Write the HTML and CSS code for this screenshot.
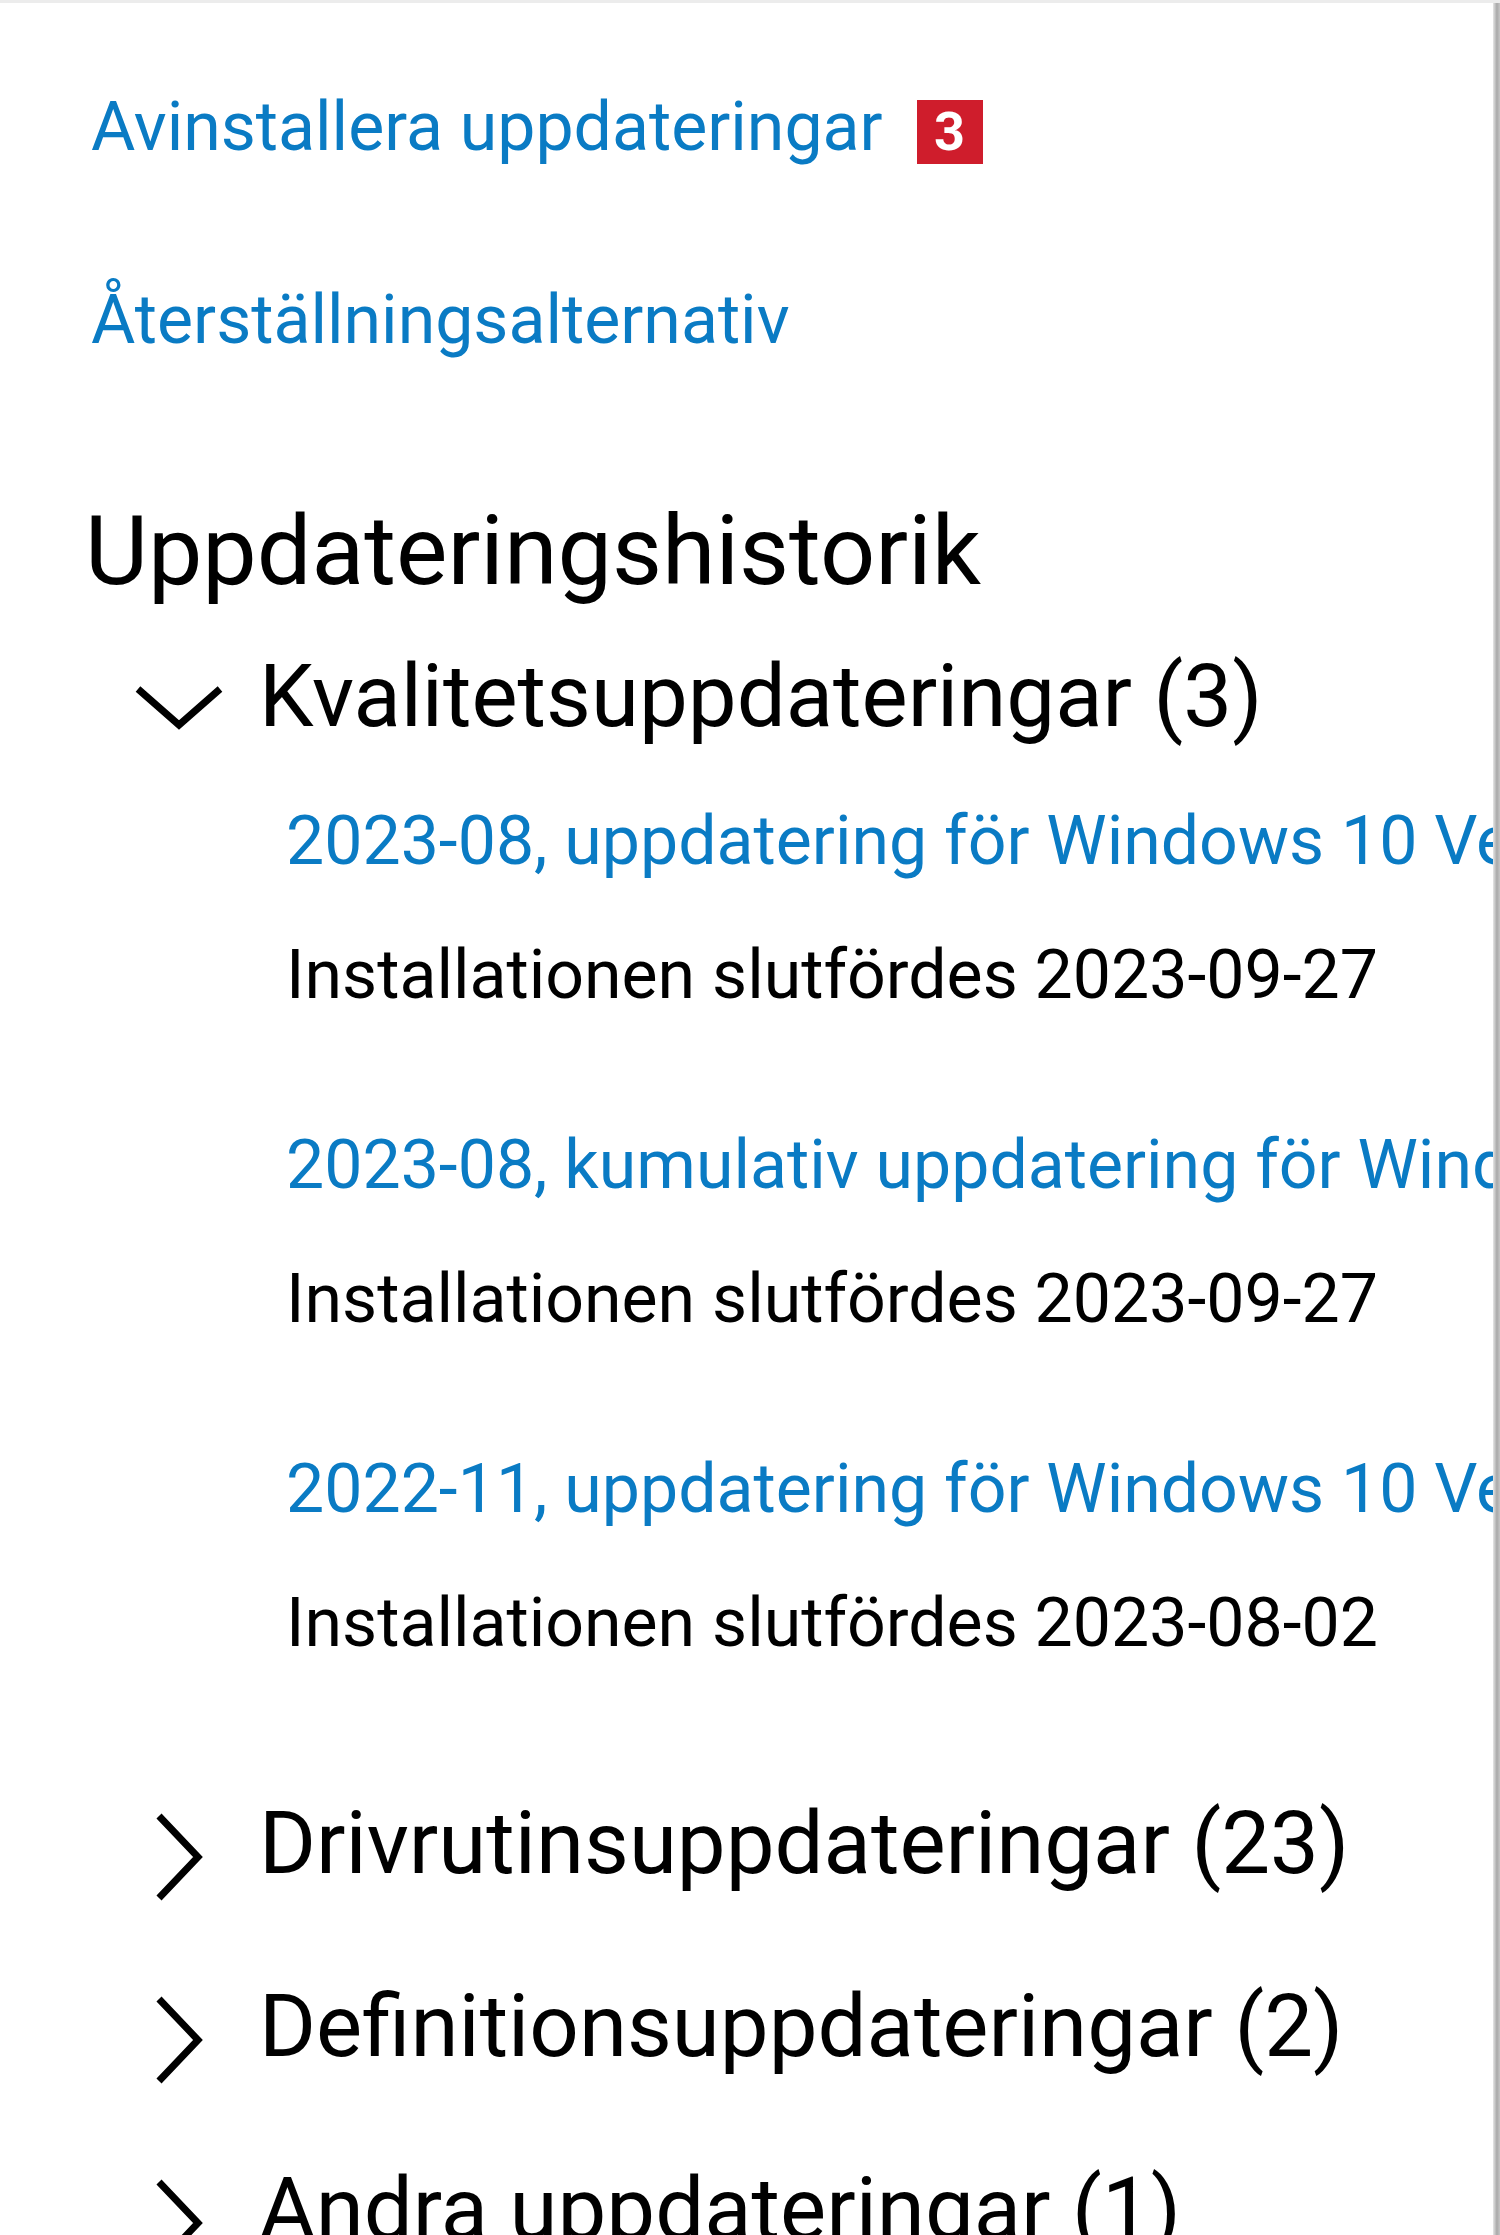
FILE: index.html
```html
<!DOCTYPE html>
<html lang="sv">
<head>
<meta charset="utf-8">
<title>Uppdateringshistorik</title>
<link rel="stylesheet" href="styles.css">
</head>
<body>
<div class="frame">
  <main class="panel">
    <div class="link-row">
      <a class="link" href="#">Avinstallera uppdateringar</a>
      <span class="badge">3</span>
    </div>
    <a class="link link-second" href="#">Återställningsalternativ</a>

    <h1 class="heading">Uppdateringshistorik</h1>

    <section class="group open">
      <div class="group-head">
        <span class="chev chev-down">
          <svg width="90" height="45" viewBox="0 0 90 45"><polyline points="4,4 45,40 86,4" fill="none" stroke="#000" stroke-width="7"/></svg>
        </span>
        <span class="group-title">Kvalitetsuppdateringar (3)</span>
      </div>
      <ul class="items">
        <li class="item">
          <a class="link" href="#">2023-08, uppdatering för Windows 10 Version 22H2 för x64-baserade system (KB5029709)</a>
          <p class="status">Installationen slutfördes 2023-09-27</p>
        </li>
        <li class="item">
          <a class="link" href="#">2023-08, kumulativ uppdatering för Windows 10 Version 22H2 för x64-baserade system (KB5029244)</a>
          <p class="status">Installationen slutfördes 2023-09-27</p>
        </li>
        <li class="item">
          <a class="link" href="#">2022-11, uppdatering för Windows 10 Version 22H2 för x64-baserade system (KB4023057)</a>
          <p class="status">Installationen slutfördes 2023-08-02</p>
        </li>
      </ul>
    </section>

    <section class="group closed">
      <div class="group-head">
        <span class="chev chev-right">
          <svg width="48" height="88" viewBox="0 0 48 88"><polyline points="4,3 43,44 4,85" fill="none" stroke="#000" stroke-width="7"/></svg>
        </span>
        <span class="group-title">Drivrutinsuppdateringar (23)</span>
      </div>
    </section>

    <section class="group closed">
      <div class="group-head">
        <span class="chev chev-right">
          <svg width="48" height="88" viewBox="0 0 48 88"><polyline points="4,3 43,44 4,85" fill="none" stroke="#000" stroke-width="7"/></svg>
        </span>
        <span class="group-title">Definitionsuppdateringar (2)</span>
      </div>
    </section>

    <section class="group closed">
      <div class="group-head">
        <span class="chev chev-right">
          <svg width="48" height="88" viewBox="0 0 48 88"><polyline points="4,3 43,44 4,85" fill="none" stroke="#000" stroke-width="7"/></svg>
        </span>
        <span class="group-title">Andra uppdateringar (1)</span>
      </div>
    </section>
  </main>
  <div class="edge"></div>
</div>
</body>
</html>
```

FILE: styles.css
```css
* {
  box-sizing: border-box;
}

html,
body {
  margin: 0;
  padding: 0;
  background: #ffffff;
}

body {
  font-family: Roboto, "Noto Sans", "Liberation Sans", sans-serif;
  color: #000000;
  height: 2235px;
  overflow: hidden;
}

.frame {
  display: flex;
  height: 2235px;
  border-top: 3px solid #ececec;
}

.panel {
  flex: 1;
  min-width: 0;
  overflow: hidden;
  padding: 84px 0 0 91px;
  white-space: nowrap;
}

.edge {
  width: 7px;
  flex: none;
  background: linear-gradient(to right, #e6e6e6, #a9a9a9 55%, #c6c6c6);
}

.link {
  display: block;
  font-size: 68px;
  line-height: 80px;
  color: #0a7bc4;
  text-decoration: none;
}

.link-row {
  display: flex;
  align-items: flex-start;
  gap: 34px;
}

.badge {
  margin-top: 13px;
  width: 66px;
  height: 64px;
  background: #cf1d2c;
  color: #ffffff;
  font-weight: 700;
  font-size: 54px;
  line-height: 64px;
  text-align: center;
}

.link-second {
  margin-top: 113px;
}

.heading {
  margin: 136px 0 0 -6px;
  font-size: 97px;
  line-height: 110px;
  font-weight: 400;
}

.group-head {
  display: flex;
  align-items: flex-start;
  margin-left: 42px;
}

.group.open .group-head {
  margin-top: 40px;
}

.group.closed {
  margin-top: 75px;
}

.group.open + .group.closed {
  margin-top: 130px;
}

.chev {
  width: 92px;
  flex: none;
  display: flex;
  justify-content: center;
  margin-right: 34px;
}

.chev-down svg {
  margin-top: 39px;
}

.chev-right svg {
  margin-top: 20px;
}

.group-title {
  font-size: 87px;
  line-height: 100px;
}

.items {
  list-style: none;
  margin: 55px 0 0;
  padding: 0 0 0 195px;
}

.item + .item {
  margin-top: 110px;
}

.status {
  margin: 54px 0 0;
  font-size: 68px;
  line-height: 80px;
}
```
